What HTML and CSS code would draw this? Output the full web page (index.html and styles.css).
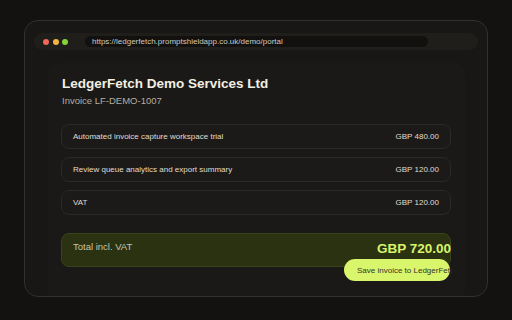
FILE: index.html
```html
<!DOCTYPE html>
<html>
<head>
<meta charset="utf-8">
<link rel="stylesheet" href="styles.css">
</head>
<body>
<div class="window">
  <div class="bar">
    <div class="dots">
      <span class="dot red"></span>
      <span class="dot yellow"></span>
      <span class="dot green"></span>
    </div>
    <div class="url">https://ledgerfetch.promptshieldapp.co.uk/demo/portal</div>
  </div>
  <div class="panel">
    <h1 class="title">LedgerFetch Demo Services Ltd</h1>
    <div class="subtitle">Invoice LF-DEMO-1007</div>
    <div class="items">
      <div class="row"><span>Automated invoice capture workspace trial</span><span>GBP 480.00</span></div>
      <div class="row"><span>Review queue analytics and export summary</span><span>GBP 120.00</span></div>
      <div class="row"><span>VAT</span><span>GBP 120.00</span></div>
      <div class="total">
        <span class="total-label">Total incl. VAT</span>
        <div class="total-right">
          <div class="amount">GBP 720.00</div>
          <button class="save">Save invoice to LedgerFetch</button>
        </div>
      </div>
    </div>
  </div>
</div>
</body>
</html>
```
FILE: styles.css
```css
* { box-sizing: border-box; }
html, body { margin: 0; padding: 0; }
body {
  background: #131210;
  font-family: "Liberation Sans", Arial, sans-serif;
  width: 512px;
  height: 320px;
  overflow: hidden;
  padding: 20px 24px 0 24px;
}
.window {
  width: 464px;
  height: 277px;
  border: 1px solid #33312d;
  border-radius: 14px;
  background: #181715;
  padding: 12px 9px 0 9px;
  overflow: hidden;
}
.bar {
  height: 17px;
  border-radius: 9px;
  background: #1f1e1b;
  display: flex;
  align-items: center;
  padding-left: 9px;
}
.dots { display: flex; gap: 3.5px; }
.dot { width: 6px; height: 6px; border-radius: 50%; display: block; }
.red { background: #f0695b; }
.yellow { background: #f2b443; }
.green { background: #86d23a; }
.url {
  margin-left: 17px;
  width: 343px;
  height: 11px;
  border-radius: 6px;
  background: #121110;
  color: #cfcabd;
  font-size: 8px;
  line-height: 11px;
  padding-left: 7px;
  white-space: nowrap;
}
.panel {
  margin: 13px 13px 0 14px;
  height: 240px;
  background: #1a1917;
  border-radius: 10px;
  padding: 13px 14px 0 13px;
}
.title {
  margin: 0 0 0 1px;
  font-size: 13.5px;
  line-height: 16px;
  font-weight: bold;
  color: #f2eee2;
}
.subtitle {
  margin: 3px 0 0 1px;
  font-size: 9.5px;
  line-height: 12px;
  color: #b3ada0;
}
.items {
  margin-top: 17px;
  display: flex;
  flex-direction: column;
  gap: 8px;
  overflow-x: clip;
  width: 391px;
}
.row {
  width: 390px;
  height: 25px;
  border: 1px solid #2b2a26;
  border-radius: 8px;
  background: #1b1a18;
  display: flex;
  justify-content: space-between;
  align-items: center;
  padding: 0 11px;
  font-size: 8px;
  color: #e0dccf;
}
.total {
  margin-top: 10px;
  width: 390px;
  height: 34px;
  border: 1px solid #3b4417;
  border-radius: 8px;
  background: #2b3211;
  display: flex;
  justify-content: space-between;
  align-items: flex-start;
  padding: 7px 0 0 11px;
}
.total-label {
  font-size: 9.5px;
  line-height: 12px;
  color: #c7c3ad;
}
.total-right {
  display: flex;
  flex-direction: column;
  align-items: flex-end;
}
.amount {
  font-size: 13.5px;
  line-height: 16px;
  font-weight: bold;
  color: #d7f46b;
  margin-right: -1px;
}
.save {
  margin-top: 2px;
  width: 106px;
  height: 22px;
  border: none;
  border-radius: 11px;
  background: #d8f56c;
  color: #34372a;
  font-family: "Liberation Sans", Arial, sans-serif;
  font-size: 8px;
  text-align: left;
  padding: 0 0 0 13px;
  white-space: nowrap;
  overflow: visible;
}
```
